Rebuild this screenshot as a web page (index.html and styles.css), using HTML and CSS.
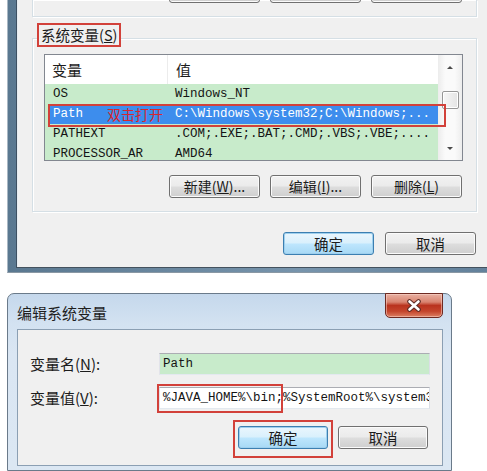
FILE: index.html
```html
<!DOCTYPE html>
<html lang="zh-CN">
<head>
<meta charset="utf-8">
<title>环境变量</title>
<link rel="stylesheet" href="styles.css">
</head>
<body>
<div class="win1">
  <div class="panel">
    <div class="group group1">
      <div class="btnrow btnrow-top">
        <div class="btn" aria-label="新建"></div>
        <div class="btn" aria-label="编辑"></div>
        <div class="btn" aria-label="删除"></div>
      </div>
    </div>
    <div class="glabel">系统变量(<u>S</u>)</div>
    <div class="group group2">
      <div class="list">
        <div class="lbody">
          <div class="lhead"><div class="c1">变量</div><div class="c2">值</div></div>
          <div class="rows">
            <div class="row"><div class="c1">OS</div><div class="c2">Windows_NT</div></div>
            <div class="row sel"><div class="c1">Path<span class="note">双击打开</span></div><div class="c2">C:\Windows\system32;C:\Windows;...</div></div>
            <div class="row"><div class="c1">PATHEXT</div><div class="c2">.COM;.EXE;.BAT;.CMD;.VBS;.VBE;....</div></div>
            <div class="row"><div class="c1">PROCESSOR_AR</div><div class="c2">AMD64</div></div>
          </div>
        </div>
        <div class="sb">
          <div class="sb-btn"><span class="tri-up"></span></div>
          <div class="sb-track"><div class="thumb"></div></div>
          <div class="sb-btn"><span class="tri-down"></span></div>
        </div>
        <div class="mark mark-path"></div>
      </div>
      <div class="btnrow btnrow-sys">
        <div class="btn">新建(<u>W</u>)...</div>
        <div class="btn">编辑(<u>I</u>)...</div>
        <div class="btn">删除(<u>L</u>)</div>
      </div>
    </div>
    <div class="btnrow btnrow-main">
      <div class="btn btn-default">确定</div>
      <div class="btn">取消</div>
    </div>
  </div>
</div>

<div class="dlg">
  <div class="titlebar">
    <div class="title">编辑系统变量</div>
    <div class="close">
      <svg width="16" height="13" viewBox="0 0 16 13">
        <path d="M3.5 2.5 L12.5 10.5 M12.5 2.5 L3.5 10.5" stroke="#5b2a24" stroke-width="4.6" stroke-linecap="round" fill="none"/>
        <path d="M3.5 2.5 L12.5 10.5 M12.5 2.5 L3.5 10.5" stroke="#ffffff" stroke-width="2.6" stroke-linecap="round" fill="none"/>
      </svg>
    </div>
  </div>
  <div class="dpanel">
    <div class="frow">
      <div class="flabel">变量名(<u>N</u>):</div>
      <div class="field field-green">Path</div>
    </div>
    <div class="frow">
      <div class="flabel">变量值(<u>V</u>):</div>
      <div class="fwrap">
        <div class="field">%JAVA_HOME%\bin;%SystemRoot%\system32;%SystemRoot%</div>
        <div class="mark mark-field"></div>
      </div>
    </div>
    <div class="btnrow fbtns">
      <div class="bwrap">
        <div class="btn btn-default btn-d">确定</div>
        <div class="mark mark-ok"></div>
      </div>
      <div class="btn btn-d">取消</div>
    </div>
  </div>
</div>
</body>
</html>
```

FILE: styles.css
```css
* { box-sizing: border-box; }
html, body { margin: 0; padding: 0; }
body {
  width: 487px;
  height: 471px;
  overflow: hidden;
  background: #ffffff;
  font-family: "Noto Sans CJK SC", "Noto Sans", sans-serif;
  color: #1c1c1c;
}
u { text-decoration: underline; text-underline-offset: 1px; }

/* ---------- top window ---------- */
.win1 {
  margin-left: 7px;
  width: 490px;
  border-left: 1px solid #a9b7c3;
  border-bottom: 1px solid #8a98a4;
  padding: 0 0 4px 8px;
  background: linear-gradient(90deg, #5a7890 0%, #7794ac 60%, #62809a 100%);
}
.panel {
  display: flow-root;
  height: 268px;
  background: #f0f0f0;
  border-left: 1px solid #3e5061;
  border-bottom: 1px solid #44525e;
  padding-left: 15px;
  box-shadow: inset 1px 0 0 #e4ebf0;
}
.group {
  width: 445px;
  border: 1px solid #d5dfe5;
  box-shadow: inset 1px 1px 0 #ffffff, 1px 1px 0 #ffffff;
}
.group1 {
  display: flow-root;
  height: 17px;
  border-top: 0;
}
.btnrow {
  display: flex;
  justify-content: flex-end;
  gap: 10px;
}
.btnrow-top {
  margin-top: -20px;
  padding-right: 14px;
}
.btn {
  width: 91px;
  height: 23px;
  border: 1px solid #707070;
  border-radius: 3px;
  background: linear-gradient(#f2f2f2 0%, #ebebeb 48%, #dddddd 52%, #cfcfcf 100%);
  box-shadow: inset 0 0 0 1px #fbfbfb;
  font-size: 14px;
  line-height: 21px;
  text-align: center;
  color: #1c1c1c;
}
.btn-default {
  border-color: #3c7fb1;
  background: linear-gradient(#eaf6fd 0%, #d9f0fc 48%, #bee6fd 52%, #a7d9f5 100%);
  box-shadow: inset 0 0 0 1px #9fd0ee;
}
.glabel {
  position: relative;
  z-index: 1;
  width: fit-content;
  height: 24px;
  margin: 6px 0 0 5px;
  padding: 0 2px;
  border: 2px solid #d2413a;
  background: #f0f0f0;
  font-size: 14.5px;
  line-height: 20px;
}
.group2 {
  margin-top: -9px;
  height: 174px;
  padding: 15px 13px 13px 11px;
}
.list {
  position: relative;
  width: 419px;
  height: 107px;
  border: 1px solid #828790;
  background: #ffffff;
  display: flex;
}
.lbody {
  flex: 1;
  overflow: hidden;
}
.lhead {
  height: 29px;
  display: flex;
  align-items: center;
  font-size: 15px;
  background: #ffffff;
}
.lhead .c1 {
  width: 123px;
  height: 100%;
  padding-left: 7px;
  line-height: 29px;
  border-right: 1px solid #ececec;
}
.lhead .c2 { padding-left: 8px; }
.rows {
  background: #c8ebcb;
  height: 100%;
}
.row {
  height: 20px;
  margin-left: 5px;
  display: flex;
  align-items: center;
  font-family: "Liberation Mono", monospace;
  font-size: 12.5px;
  white-space: nowrap;
  color: #141414;
}
.row .c1 {
  width: 118px;
  padding-left: 3px;
  display: flex;
  align-items: center;
}
.row .c2 { padding-left: 7px; }
.row.sel {
  background: #3d8ded;
  color: #ffffff;
}
.note {
  margin-left: 24px;
  font-family: "Noto Sans CJK SC", sans-serif;
  font-size: 14px;
  color: #d8262e;
}
.sb {
  width: 24px;
  display: flex;
  flex-direction: column;
  background: linear-gradient(90deg, #ececec, #fafafa 30%, #fafafa 70%, #ededed);
}
.sb-btn {
  height: 24px;
  display: flex;
  align-items: center;
  justify-content: center;
}
.tri-up, .tri-down {
  width: 0;
  height: 0;
  border-left: 3px solid transparent;
  border-right: 3px solid transparent;
}
.tri-up { border-bottom: 3px solid #4a4a4a; }
.tri-down { border-top: 3px solid #4a4a4a; }
.sb-track { flex: 1; }
.thumb {
  margin: 12px 3px 0 4px;
  height: 18px;
  border: 1px solid #979797;
  border-radius: 2px;
  background: linear-gradient(90deg, #f7f7f7, #e4e4e4);
  box-shadow: inset 0 0 0 1px #ffffff;
}
.mark {
  position: absolute;
  border: 2px solid #d2413a;
  pointer-events: none;
}
.mark-path {
  left: 3px;
  top: 49px;
  width: 398px;
  height: 23px;
}
.btnrow-sys {
  margin-top: 14px;
  margin-right: 1px;
}
.btnrow-main {
  width: 445px;
  margin-top: 20px;
  gap: 11px;
  padding-right: 1px;
}
.btnrow-main .btn { font-size: 14.5px; }

/* ---------- edit dialog ---------- */
.dlg {
  margin: 20px 0 0 7px;
  width: 445px;
  height: 178px;
  border: 1px solid #6a7a8a;
  border-radius: 7px 7px 0 0;
  padding: 0 8px 4px 9px;
  background: linear-gradient(#c5d8ec 0%, #d3e2f1 30px, #dae6f3 60px, #dbe7f3 100%);
}
.titlebar {
  height: 35px;
  display: flex;
  align-items: center;
}
.title {
  font-size: 15px;
  color: #1e1e1e;
  padding-top: 1px;
}
.close {
  align-self: flex-start;
  margin-left: auto;
  margin-top: -1px;
  width: 58px;
  height: 25px;
  border: 1px solid #6e2a22;
  border-radius: 0 0 5px 5px;
  background: linear-gradient(#e8b0a2 0%, #d98470 35%, #b9331e 50%, #c4452c 75%, #dc8064 100%);
  box-shadow: inset 0 0 0 1px rgba(255, 220, 210, 0.5);
  display: flex;
  align-items: center;
  justify-content: center;
}
.dpanel {
  height: 137px;
  border: 1px solid #8b9fb3;
  background: #f0f0f0;
  padding: 23px 12px 0 12px;
}
.frow {
  display: flex;
  align-items: center;
  height: 22px;
}
.frow + .frow { margin-top: 12px; }
.flabel {
  width: 129px;
  font-size: 15px;
  line-height: 22px;
}
.fwrap { position: relative; }
.field {
  width: 271px;
  height: 22px;
  border: 1px solid #abadb3;
  border-color: #abadb3 #dbdfe6 #e3e9ef #e2e3ea;
  background: #ffffff;
  padding-left: 3px;
  font-family: "Liberation Mono", monospace;
  font-size: 12.5px;
  line-height: 20px;
  white-space: nowrap;
  overflow: hidden;
  color: #141414;
}
.field-green { background: #c8ebcb; }
.mark-field {
  left: -2px;
  top: -3px;
  width: 126px;
  height: 29px;
}
.fbtns {
  margin-top: 17px;
  margin-right: 2px;
  gap: 10px;
}
.bwrap { position: relative; }
.btn-d {
  width: 90px;
  font-size: 14.5px;
}
.mark-ok {
  left: -5px;
  top: -6px;
  width: 100px;
  height: 38px;
}
```
